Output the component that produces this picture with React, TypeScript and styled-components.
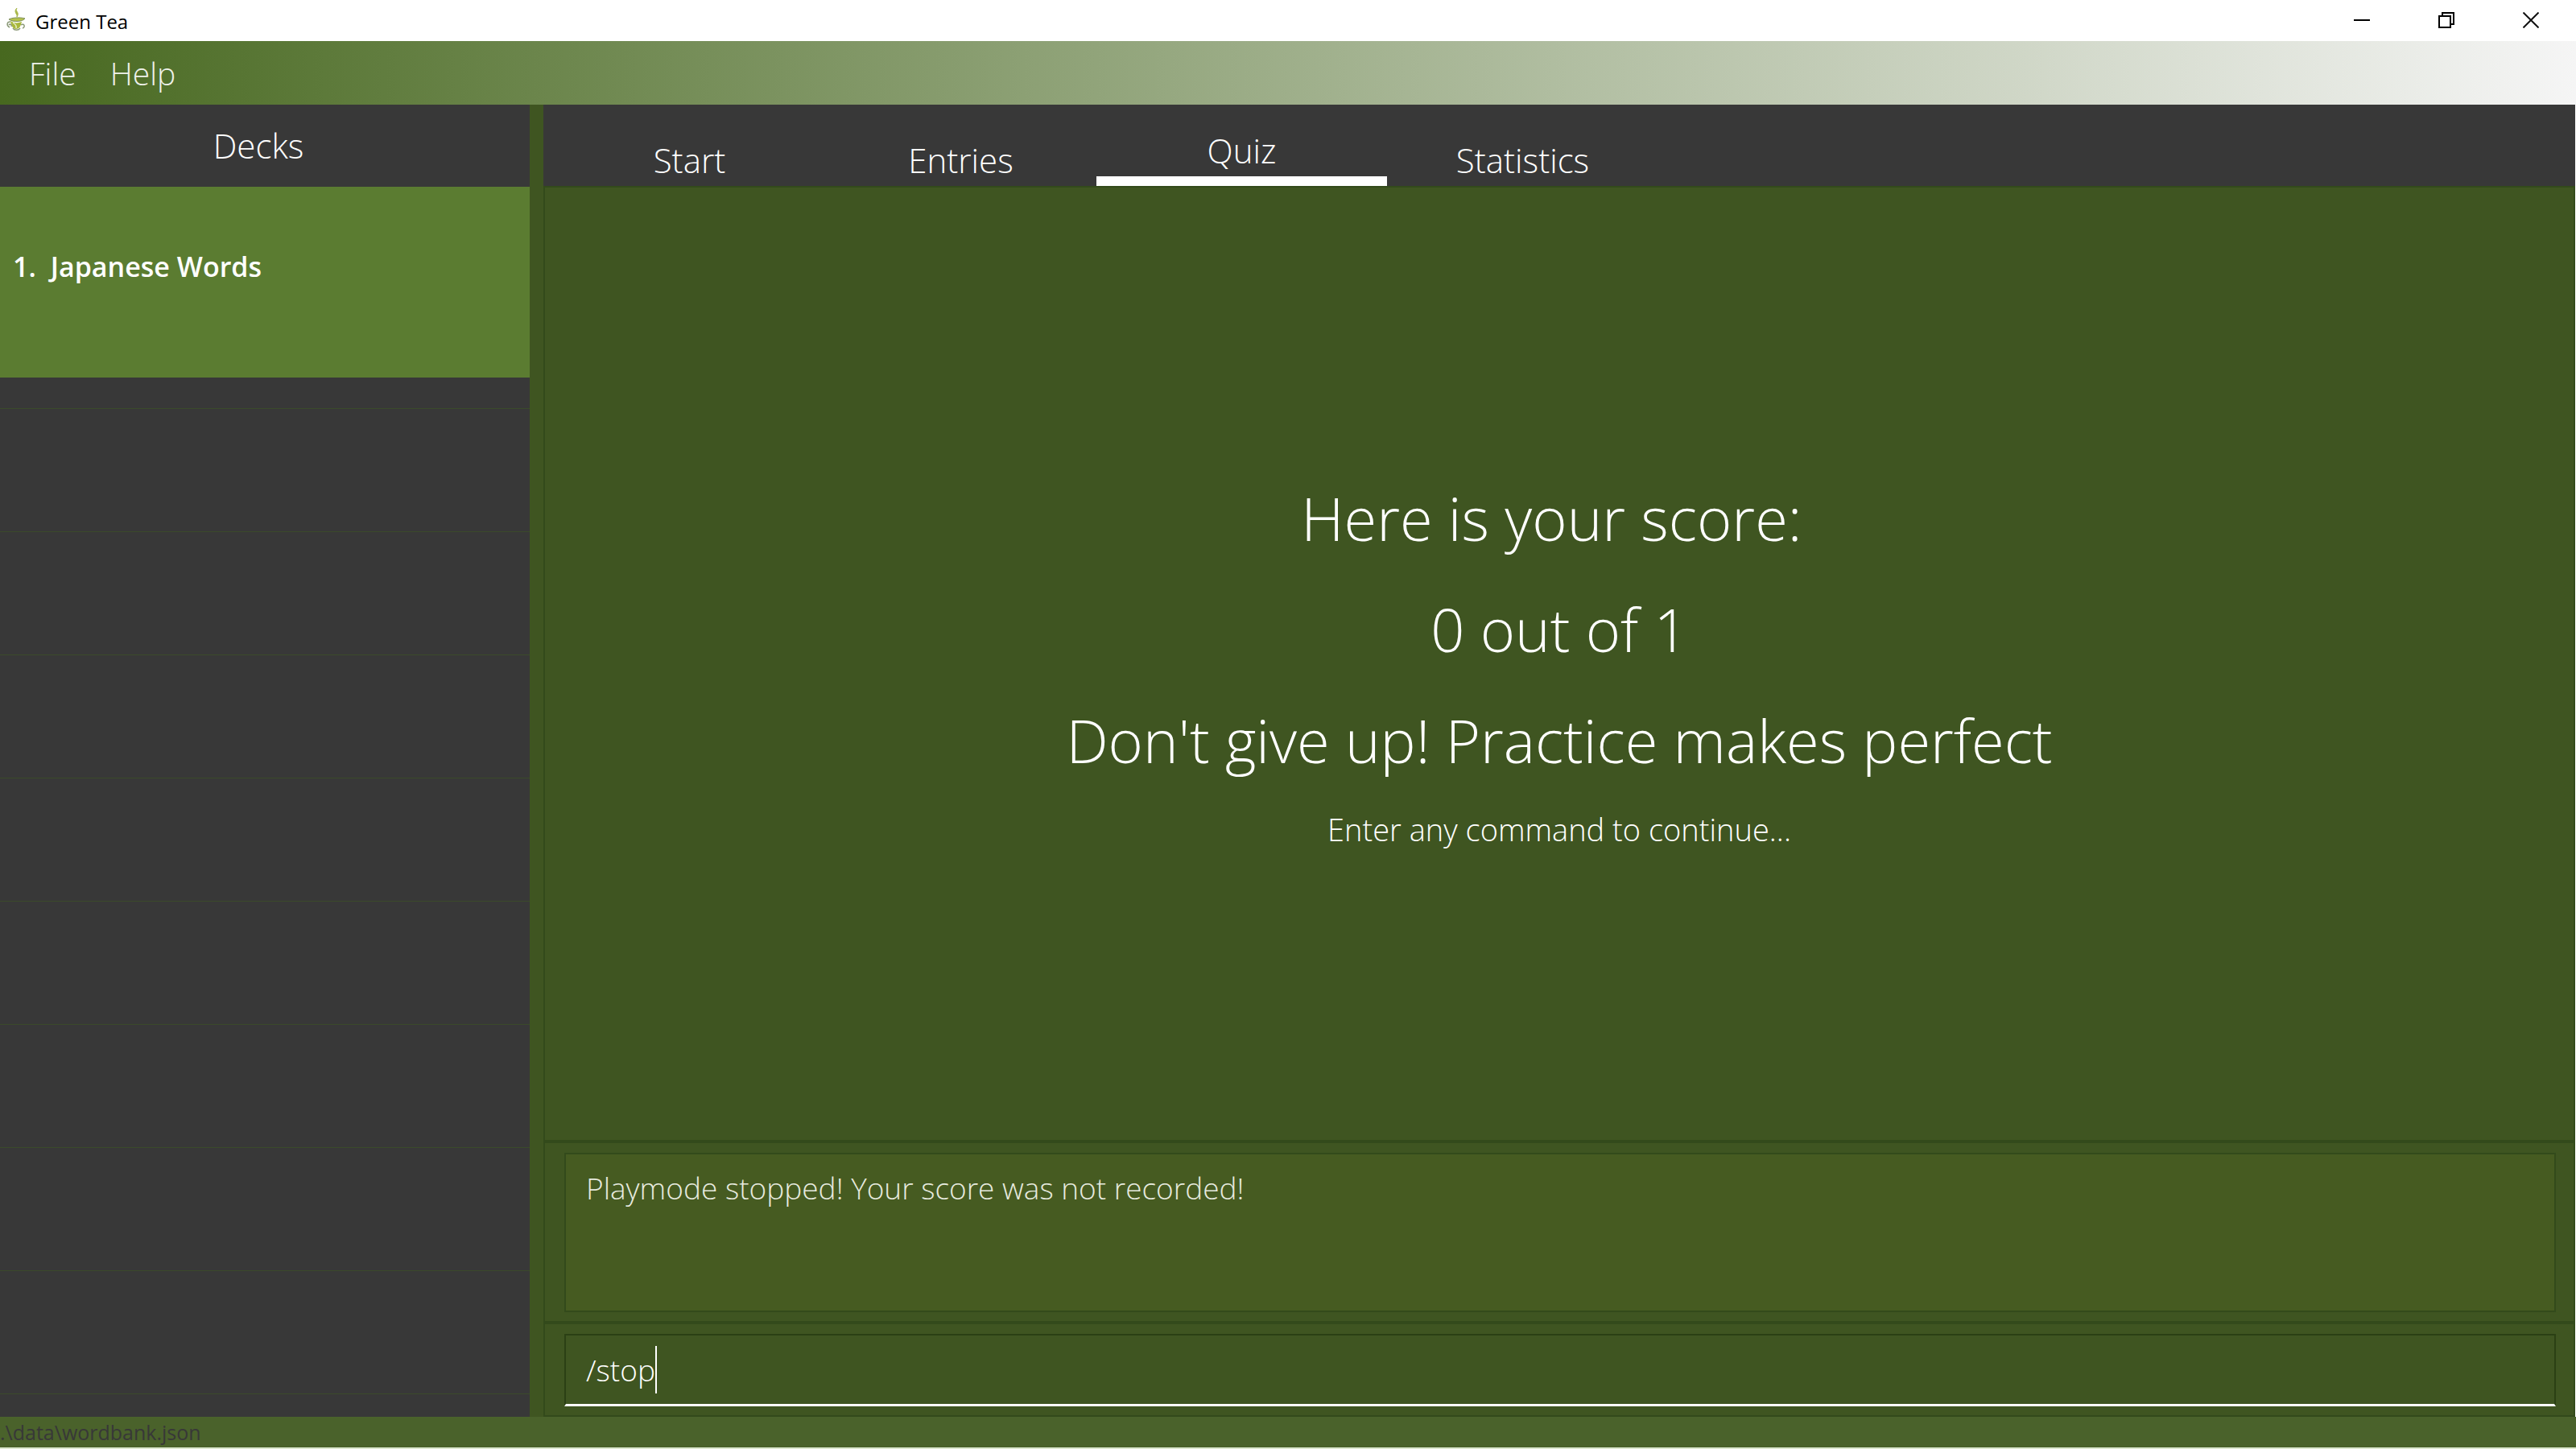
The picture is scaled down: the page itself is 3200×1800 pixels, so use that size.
import React, { useState } from "react";
import styled, { createGlobalStyle } from "styled-components";

const color = {
  slate: "#383838",
  moss: "#3f5521",
  mossDark: "#334a1b",
  mossDeep: "#2b4014",
  olive: "#465b21",
  leaf: "#5b7c31",
  status: "#4a622b",
};

const GlobalStyle = createGlobalStyle`
  *, *::before, *::after { box-sizing: border-box; }
  body { margin: 0; background: #fff; }
  body, button, input {
    font-family: "Open Sans", "Noto Sans", sans-serif;
    font-weight: 300;
  }
  button {
    border: 0;
    padding: 0;
    background: none;
    color: inherit;
  }
  h1, h2, p, ul, ol { margin: 0; padding: 0; font-weight: inherit; }
`;

const Window = styled.div`
  display: flex;
  flex-direction: column;
  height: 100vh;
  overflow: hidden;
`;

const TitleBar = styled.header`
  display: flex;
  align-items: center;
  flex: none;
  height: 51px;
  padding: 0 4px 2px 8px;
  background: #fff;
  color: #000;
`;

const Title = styled.h1`
  flex: 1;
  padding: 4px 0 0 12px;
  font-size: 24px;
  line-height: 32px;
  font-weight: 400;
`;

const WindowButton = styled.button`
  display: flex;
  align-items: center;
  justify-content: center;
  width: 105px;
  height: 48px;
`;

const MenuBar = styled.nav`
  display: flex;
  align-items: center;
  gap: 42px;
  flex: none;
  height: 79px;
  padding: 0 36px;
  background: linear-gradient(to right, #47681f, #f5f5f5);
`;

const MenuButton = styled.button`
  color: #eef1ea;
  font-size: 39px;
  line-height: 56px;
`;

const Body = styled.div`
  display: flex;
  flex: 1;
  min-height: 0;
  padding-right: 1px;
`;

const Sidebar = styled.aside`
  display: flex;
  flex-direction: column;
  flex: none;
  width: 658px;
  background: ${color.slate};
  color: #fff;
`;

const SidebarTitle = styled.h2`
  flex: none;
  height: 102px;
  padding: 19px 16px 0 0;
  font-size: 42px;
  line-height: 64px;
  text-align: center;
`;

const DeckList = styled.ol`
  flex: 1;
  min-height: 0;
  overflow: hidden;
  list-style: none;
`;

const DeckCard = styled.li`
  display: flex;
  align-items: center;
  gap: 18px;
  height: 237px;
  padding: 0 16px 40px;
  background: ${color.leaf};
  font-size: 34px;
  line-height: 48px;
  font-weight: 600;
`;

const EmptyRow = styled.li<{ $first?: boolean }>`
  height: ${(p) => (p.$first ? 39 : 153)}px;
  border-bottom: 1px solid #3b4a2a;
`;

const Splitter = styled.div`
  flex: none;
  width: 17px;
  background: ${color.moss};
`;

const Main = styled.main`
  display: flex;
  flex-direction: column;
  flex: 1;
  min-width: 0;
  background: ${color.moss};
`;

const TabStrip = styled.div`
  display: flex;
  flex: none;
  height: 101px;
  padding-left: 13px;
  background: ${color.slate};
`;

const Tab = styled.button<{ $active?: boolean }>`
  width: ${(p) => (p.$active ? 361 : 337)}px;
  padding-top: ${(p) => (p.$active ? 24 : 36)}px;
  border-bottom: ${(p) => (p.$active ? "12px solid #fff" : "0")};
  color: #fff;
  font-size: 42px;
  line-height: 64px;
`;

const Pane = styled.section<{ $grow?: boolean }>`
  display: flex;
  flex-direction: column;
  justify-content: center;
  flex: ${(p) => (p.$grow ? "1" : "none")};
  min-height: 0;
  padding: ${(p) => (p.$grow ? "0" : "12px 22px 11px 24px")};
  border: 2px solid ${color.mossDark};
`;

const Score = styled.div`
  padding-bottom: 4px;
  color: #fff;
  text-align: center;
`;

const ScoreLine = styled.p`
  font-size: 74px;
  line-height: 138px;
  white-space: pre;
`;

const Hint = styled.p`
  font-size: 38px;
  line-height: 82px;
`;

const Result = styled.div`
  height: 198px;
  padding: 14px 25px;
  border: 2px solid ${color.mossDark};
  background: ${color.olive};
  color: #e6eadf;
  font-size: 37px;
  line-height: 56px;
`;

const CommandBox = styled.label`
  display: flex;
  align-items: center;
  height: 90px;
  padding: 0 25px;
  border: 2px solid ${color.mossDeep};
  border-bottom: 3px solid #fff;
`;

const CommandInput = styled.input`
  field-sizing: content;
  max-width: 100%;
  padding: 0;
  border: 0;
  outline: 0;
  background: none;
  color: #fff;
  caret-color: transparent;
  font-size: 37px;
  line-height: 56px;
`;

const Caret = styled.span`
  flex: none;
  width: 2px;
  height: 59px;
  background: #fff;
`;

const StatusBar = styled.footer`
  flex: none;
  height: 40px;
  border-bottom: 2px solid #dde8d0;
  background: ${color.status};
  color: ${color.slate};
  font-size: 25px;
  line-height: 38px;
  font-weight: 400;
`;

const TeaLogo = () => (
  <svg width="24" height="30" viewBox="0 0 24 30" fill="none" aria-hidden="true">
    <path d="M13 0c-3 4 4 5 0 11 1-4-5-6 0-11z" fill="#a9b84a" stroke="#a9b84a" />
    <path d="M5 16c1 6 3 10 7 10s6-4 7-9c-5 2-9 2-14-1z" fill="#a9b83c" />
    <path d="M3 14c3-2 14-3 20-1-3 4-14 5-20 1z" fill="#b4c24c" stroke="#7c8c5c" />
    <path d="M5 17c-5 0-5 5-1 7M3 21c2-2 4 0 3 2M18 21c4-3 6 3 2 4M8 25c2 3 7 3 9 0" stroke="#8c9a78" strokeWidth="1.500" />
    <path d="M8 18c3 2 5 4 4 7" stroke="#e9eecb" strokeWidth="1.500" />
  </svg>
);

const MinimizeIcon = () => (
  <svg width="20" height="20" aria-hidden="true">
    <path d="M0 10h20" stroke="#000" strokeWidth="2" />
  </svg>
);

const RestoreIcon = () => (
  <svg width="20" height="20" fill="none" stroke="#000" strokeWidth="2" aria-hidden="true">
    <path d="M1 5h14v14H1zM5 5V1h14v14h-4" />
  </svg>
);

const CloseIcon = () => (
  <svg width="20" height="20" stroke="#111" strokeWidth="2" aria-hidden="true">
    <path d="M0.500 0.500l19 19M19.500 0.500l-19 19" />
  </svg>
);

const tabs = ["Start", "Entries", "Quiz", "Statistics"];
const decks = ["Japanese Words"];
const emptyRows = Array.from({ length: 10 }, (_, i) => i);

export default function App() {
  const [active, setActive] = useState("Quiz");
  const [command, setCommand] = useState("/stop");

  return (
    <Window>
      <GlobalStyle />
      <TitleBar>
        <TeaLogo />
        <Title>Green Tea</Title>
        <WindowButton aria-label="Minimize"><MinimizeIcon /></WindowButton>
        <WindowButton aria-label="Restore"><RestoreIcon /></WindowButton>
        <WindowButton aria-label="Close"><CloseIcon /></WindowButton>
      </TitleBar>
      <MenuBar>
        <MenuButton>File</MenuButton>
        <MenuButton>Help</MenuButton>
      </MenuBar>
      <Body>
        <Sidebar>
          <SidebarTitle>Decks</SidebarTitle>
          <DeckList>
            {decks.map((deck, i) => (
              <DeckCard key={deck}>
                <span>{i + 1}.</span>
                <span>{deck}</span>
              </DeckCard>
            ))}
            {emptyRows.map((i) => (
              <EmptyRow key={i} $first={i === 0} />
            ))}
          </DeckList>
        </Sidebar>
        <Splitter />
        <Main>
          <TabStrip role="tablist">
            {tabs.map((tab) => (
              <Tab
                key={tab}
                role="tab"
                aria-selected={tab === active}
                $active={tab === active}
                onClick={() => setActive(tab)}
              >
                {tab}
              </Tab>
            ))}
          </TabStrip>
          <Pane $grow>
            <Score>
              <ScoreLine>{"Here is your score: "}</ScoreLine>
              <ScoreLine>0 out of 1</ScoreLine>
              <ScoreLine>Don't give up! Practice makes perfect</ScoreLine>
              <Hint>Enter any command to continue...</Hint>
            </Score>
          </Pane>
          <Pane>
            <Result role="status">Playmode stopped! Your score was not recorded!</Result>
          </Pane>
          <Pane>
            <CommandBox>
              <CommandInput
                aria-label="Command"
                value={command}
                onChange={(e) => setCommand(e.target.value)}
              />
              <Caret />
            </CommandBox>
          </Pane>
        </Main>
      </Body>
      <StatusBar>.\data\wordbank.json</StatusBar>
    </Window>
  );
}
